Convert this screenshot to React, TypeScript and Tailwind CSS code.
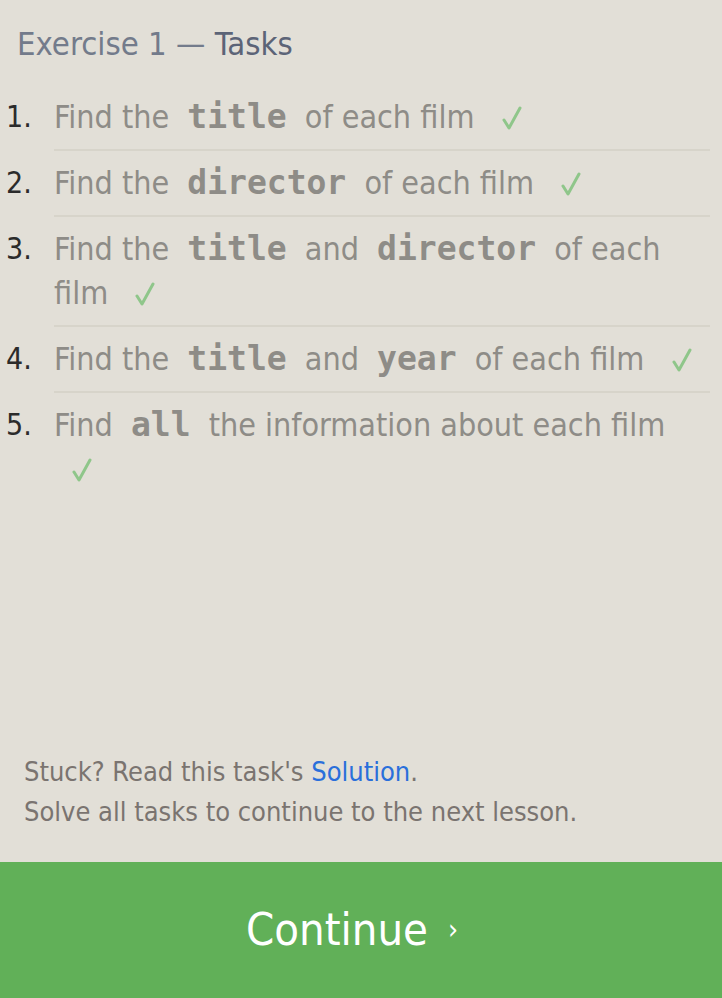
import React from "react";

const sans = "font-['DejaVu_Sans_Condensed','DejaVu_Sans',sans-serif]";

function Code({ children }: { children: React.ReactNode }) {
  return (
    <code className="font-['DejaVu_Sans_Mono',monospace] font-bold text-[33px] leading-none text-[#8e8c87] mx-[9px]">
      {children}
    </code>
  );
}

function Check() {
  return (
    <svg
      viewBox="0 0 20 26"
      className="inline-block w-[20px] h-[26px] ml-[18px] align-[-3px]"
      fill="none"
      stroke="#8fc68a"
      strokeWidth="3"
      strokeLinecap="round"
      strokeLinejoin="round"
    >
      <path d="M2 15 L7 23 L18 3" />
    </svg>
  );
}

const tasks: React.ReactNode[] = [
  <>
    Find the <Code>title</Code> of each film <Check />
  </>,
  <>
    Find the <Code>director</Code> of each film <Check />
  </>,
  <>
    Find the <Code>title</Code> and <Code>director</Code> of each <span>film</span>{" "}
    <Check />
  </>,
  <>
    Find the <Code>title</Code> and <Code>year</Code> of each film <Check />
  </>,
  <>
    Find <Code>all</Code> the information about each film <Check />
  </>,
];

export default function App() {
  return (
    <div className={`min-h-[998px] bg-[#e2dfd7] flex flex-col ${sans}`}>
      <h2 className="pl-[17px] pt-[22px] text-[32.6px] leading-[44px] text-[#737b8b]">
        Exercise 1 — <span className="text-[#5c6477]">Tasks</span>
      </h2>

      <ol className="mt-[19px]">
        {tasks.map((task, i) => (
          <li key={i} className="flex">
            <span className="w-[54px] shrink-0 pl-[6px] pt-[10px] text-[30px] leading-[44px] text-[#2b2b2b]">
              {i + 1}.
            </span>
            <div
              className={`flex-1 mr-[12px] py-[10px] text-[32px] leading-[44px] text-[#8e8c87] ${
                i < tasks.length - 1 ? "border-b-2 border-[#d7d4ca]" : ""
              }`}
            >
              {task}
            </div>
          </li>
        ))}
      </ol>

      <div className="flex-1" />

      <div className="px-[24px] pb-[30px] text-[27px] leading-[40px] text-[#7a7470]">
        <p>
          Stuck? Read this task's <a className="text-[#2a6fdb]">Solution</a>.
        </p>
        <p>Solve all tasks to continue to the next lesson.</p>
      </div>

      <button className="h-[136px] pr-[18px] bg-[#61b058] text-white text-[45px] flex items-center justify-center">
        Continue <span className="ml-[20px] text-[28px]">›</span>
      </button>
    </div>
  );
}
